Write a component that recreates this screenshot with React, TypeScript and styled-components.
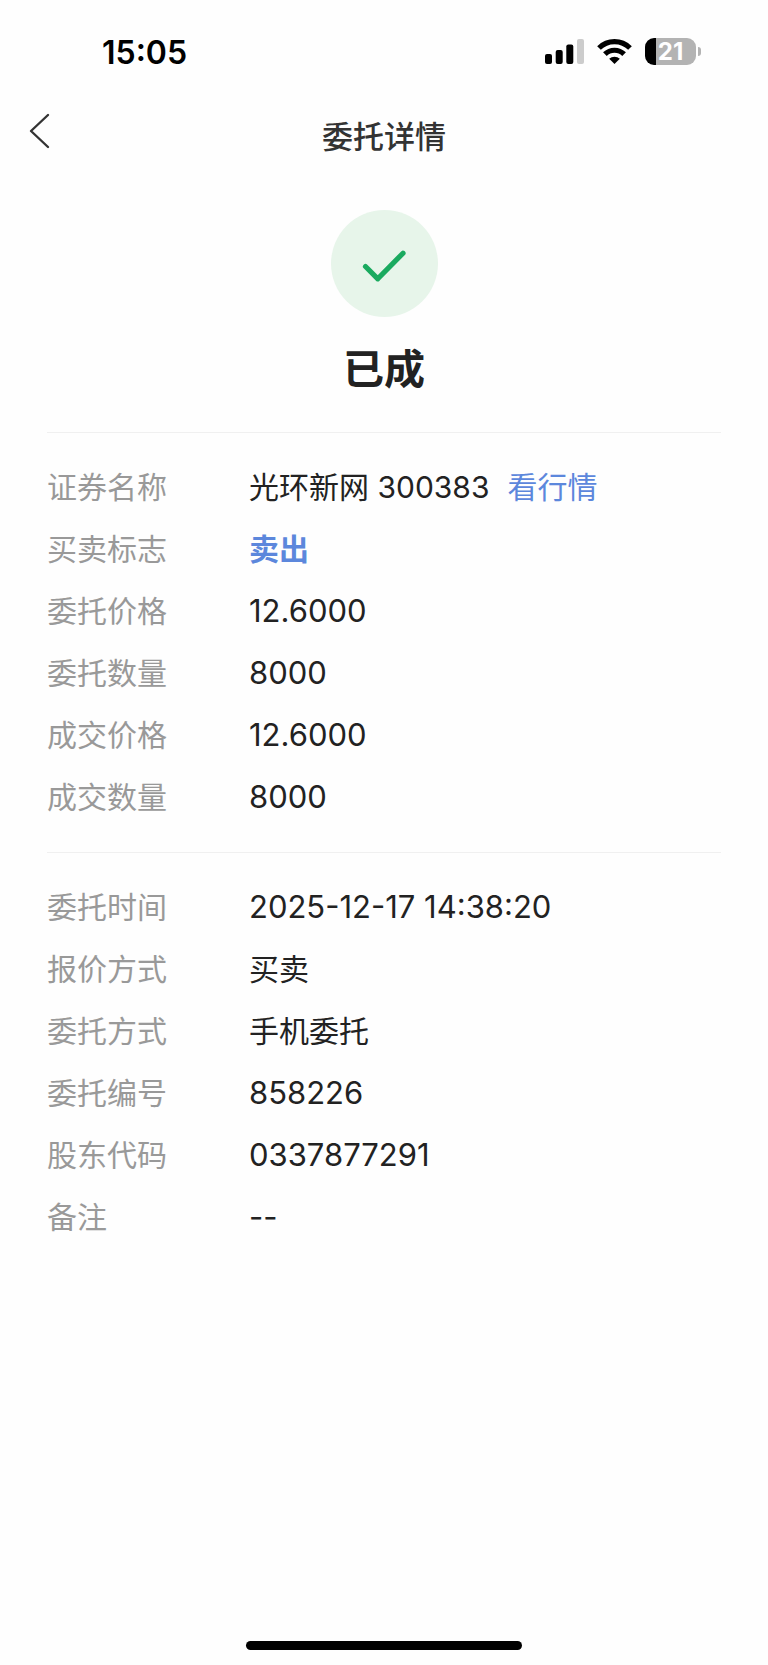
import React from "react";
import styled, { createGlobalStyle } from "styled-components";

const GlobalStyle = createGlobalStyle`
  * { box-sizing: border-box; }
  body {
    margin: 0;
    background: #fefefe;
    color: #222;
    font-family: Inter, "Noto Sans CJK SC", sans-serif;
  }
`;

const Screen = styled.div`
  display: flex;
  flex-direction: column;
  min-height: 100vh;
`;

const StatusBar = styled.header`
  display: flex;
  align-items: flex-start;
  justify-content: space-between;
  height: 104px;
  padding: 33px 67px 0 102px;
  color: #000;
`;

const Clock = styled.time`
  font-size: 32px;
  font-weight: 600;
  line-height: 40px;
`;

const StatusIcons = styled.div`
  display: flex;
  align-items: center;
  gap: 13px;
  height: 37px;

  svg { display: block; }
`;

const Battery = styled.div`
  display: flex;
  align-items: center;
  gap: 2px;
`;

const BatteryBody = styled.div`
  display: flex;
  align-items: center;
  justify-content: center;
  width: 51px;
  height: 27px;
  border-radius: 9px;
  background: linear-gradient(to right, #000 11px, #b3b3b3 11px);
  color: #fff;
  font-size: 24px;
  font-weight: 700;
  line-height: 27px;
`;

const BatteryTip = styled.div`
  width: 3px;
  height: 9px;
  border-radius: 0 4px 4px 0;
  background: #b3b3b3;
`;

const NavBar = styled.nav`
  display: grid;
  grid-template-columns: 80px 1fr 80px;
  align-items: center;
  height: 66px;
`;

const BackButton = styled.button`
  display: flex;
  align-items: flex-start;
  height: 48px;
  padding: 0 0 0 27px;
  border: 0;
  background: none;
  color: #333;
`;

const Title = styled.h1`
  margin: 0;
  font-size: 31px;
  font-weight: 500;
  line-height: 40px;
  text-align: center;
  color: #333;
`;

const Content = styled.main`
  padding: 40px 47px 0;
`;

const Result = styled.section`
  display: flex;
  flex-direction: column;
  align-items: center;
  gap: 22px;
  padding-bottom: 33px;
`;

const ResultBadge = styled.div`
  display: flex;
  align-items: center;
  justify-content: center;
  width: 107px;
  height: 107px;
  padding-top: 3px;
  border-radius: 50%;
  background: #e7f5ea;
`;

const ResultText = styled.h2`
  margin: 0;
  font-size: 41px;
  font-weight: 700;
  line-height: 60px;
`;

const Details = styled.dl`
  margin: 0;
  padding: 23px 0 24px;
  border-top: 1px solid #f0f0f0;
`;

const Row = styled.div`
  display: grid;
  grid-template-columns: 202px 1fr;
  align-items: center;
  height: 62px;
  font-size: 30px;
  line-height: 38px;
`;

const Label = styled.dt`
  color: #999;
`;

const Value = styled.dd<{ $accent?: boolean; $numeric?: boolean }>`
  display: flex;
  gap: 18px;
  margin: 0;
  color: ${(p) => (p.$accent ? "#5c87dc" : "#222")};
  font-size: ${(p) => (p.$numeric ? "31px" : "30px")};
  font-weight: ${(p) => (p.$accent ? 700 : 400)};
`;

const QuoteLink = styled.a`
  color: #5c87dc;
  text-decoration: none;
`;

const HomeIndicator = styled.div`
  width: 36%;
  height: 9px;
  margin: auto auto 15px;
  border-radius: 5px;
  background: #000;
`;

type Item = {
  label: string;
  value: string;
  accent?: boolean;
  numeric?: boolean;
  link?: string;
};

const trade: Item[] = [
  { label: "证券名称", value: "光环新网 300383", link: "看行情" },
  { label: "买卖标志", value: "卖出", accent: true },
  { label: "委托价格", value: "12.6000", numeric: true },
  { label: "委托数量", value: "8000", numeric: true },
  { label: "成交价格", value: "12.6000", numeric: true },
  { label: "成交数量", value: "8000", numeric: true },
];

const order: Item[] = [
  { label: "委托时间", value: "2025-12-17 14:38:20", numeric: true },
  { label: "报价方式", value: "买卖" },
  { label: "委托方式", value: "手机委托" },
  { label: "委托编号", value: "858226", numeric: true },
  { label: "股东代码", value: "0337877291", numeric: true },
  { label: "备注", value: "--", numeric: true },
];

const DetailList = ({ items }: { items: Item[] }) => (
  <Details>
    {items.map((item) => (
      <Row key={item.label}>
        <Label>{item.label}</Label>
        <Value $accent={item.accent} $numeric={item.numeric}>
          <span>{item.value}</span>
          {item.link && <QuoteLink href="#quote">{item.link}</QuoteLink>}
        </Value>
      </Row>
    ))}
  </Details>
);

const SignalIcon = () => (
  <svg width="39" height="25" viewBox="0 0 39 25" aria-hidden="true">
    <rect x="0" y="15" width="7" height="10" rx="2" />
    <rect x="10.7" y="11" width="7" height="14" rx="2" />
    <rect x="21.3" y="5.5" width="7" height="19.5" rx="2" />
    <rect x="32" y="0" width="7" height="25" rx="2" fill="#ccc" />
  </svg>
);

const WifiIcon = () => (
  <svg width="35" height="25" viewBox="0 0 35 25" aria-hidden="true">
    <g fill="none" stroke="#000" strokeWidth="5.2">
      <path d="M2 9a22 22 0 0 1 31 0" />
      <path d="M7.9 15.2a13.6 13.6 0 0 1 19.2 0" />
    </g>
    <path d="M17.5 25l-5.3-5.2a7.6 7.6 0 0 1 10.6 0z" />
  </svg>
);

export default function App() {
  return (
    <>
      <GlobalStyle />
      <Screen>
        <StatusBar>
          <Clock>15:05</Clock>
          <StatusIcons>
            <SignalIcon />
            <WifiIcon />
            <Battery>
              <BatteryBody>21</BatteryBody>
              <BatteryTip />
            </Battery>
          </StatusIcons>
        </StatusBar>
        <NavBar>
          <BackButton type="button" aria-label="返回">
            <svg width="23" height="36" viewBox="0 0 23 36" fill="none" stroke="currentColor" strokeWidth="2.4" strokeLinecap="round" strokeLinejoin="round">
              <path d="M21 2L4 18l17 16" />
            </svg>
          </BackButton>
          <Title>委托详情</Title>
        </NavBar>
        <Content>
          <Result>
            <ResultBadge>
              <svg width="44" height="34" viewBox="0 0 44 34" fill="none" stroke="#1aaa5f" strokeWidth="5.2" strokeLinecap="round" strokeLinejoin="round">
                <path d="M3.5 18.5L15.8 30.8L41 5.2" />
              </svg>
            </ResultBadge>
            <ResultText>已成</ResultText>
          </Result>
          <DetailList items={trade} />
          <DetailList items={order} />
        </Content>
        <HomeIndicator />
      </Screen>
    </>
  );
}
